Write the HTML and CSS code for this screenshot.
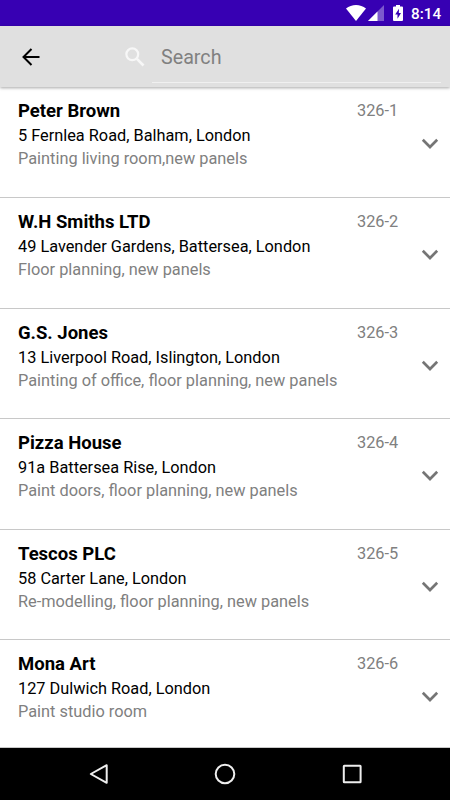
FILE: index.html
```html
<!DOCTYPE html>
<html lang="en">
<head>
<meta charset="utf-8">
<title>Jobs</title>
<link rel="stylesheet" href="styles.css">
</head>
<body>
<svg width="0" height="0" class="defs"><symbol id="chevron" viewBox="0 0 18 12"><path d="M1.8 1.8 9 9l7.200-7.200" fill="none" stroke="#757575" stroke-width="2.700"/></symbol></svg>
<div class="screen">
  <div class="status">
    <svg class="wifi" viewBox="0 0 20 16"><path d="M0 3.600C5.600-1.200 14.400-1.200 20 3.600L10 16Z" fill="#fff"/></svg>
    <svg class="signal" viewBox="0 0 16 16"><path d="M0 16 16 0v16Z" fill="#fff" opacity=".35"/><path d="M0 16 9.500 6.500V16Z" fill="#fff"/></svg>
    <svg class="battery" viewBox="0 0 10 16"><path d="M3 0h4v1.500h2a1 1 0 0 1 1 1V15a1 1 0 0 1-1 1H1a1 1 0 0 1-1-1V2.500a1 1 0 0 1 1-1h2Z" fill="#fff"/><path d="M6 3.800 2.200 9.500h2.300v4.200L8 8H5.800Z" fill="#3700b3"/></svg>
    <span class="clock">8:14</span>
  </div>
  <header class="toolbar">
    <svg class="back" viewBox="0 0 18 18"><path d="M17.500 9H1.500M9.500 1 1.500 9l8 8" fill="none" stroke="#000" stroke-width="2"/></svg>
    <svg class="lens" viewBox="0 0 20 20"><circle cx="7.300" cy="7.300" r="5.900" fill="none" stroke="#f7f7f7" stroke-width="2.200"/><path d="m11.700 11.700 6.800 6.800" stroke="#f7f7f7" stroke-width="2.600"/></svg>
    <div class="field">Search</div>
  </header>
  <main class="list">
    <article class="job"><h2>Peter Brown</h2><span class="ref">326-1</span><p class="addr">5 Fernlea Road, Balham, London</p><p class="desc">Painting living room,new panels</p><svg class="chev"><use href="#chevron"/></svg></article>
    <article class="job"><h2>W.H Smiths LTD</h2><span class="ref">326-2</span><p class="addr">49 Lavender Gardens, Battersea, London</p><p class="desc">Floor planning, new panels</p><svg class="chev"><use href="#chevron"/></svg></article>
    <article class="job"><h2>G.S. Jones</h2><span class="ref">326-3</span><p class="addr">13 Liverpool Road, Islington, London</p><p class="desc">Painting of office, floor planning, new panels</p><svg class="chev"><use href="#chevron"/></svg></article>
    <article class="job"><h2>Pizza House</h2><span class="ref">326-4</span><p class="addr">91a Battersea Rise, London</p><p class="desc">Paint doors, floor planning, new panels</p><svg class="chev"><use href="#chevron"/></svg></article>
    <article class="job"><h2>Tescos PLC</h2><span class="ref">326-5</span><p class="addr">58 Carter Lane, London</p><p class="desc">Re-modelling, floor planning, new panels</p><svg class="chev"><use href="#chevron"/></svg></article>
    <article class="job"><h2>Mona Art</h2><span class="ref">326-6</span><p class="addr">127 Dulwich Road, London</p><p class="desc">Paint studio room</p><svg class="chev"><use href="#chevron"/></svg></article>
  </main>
  <nav class="nav">
    <svg viewBox="0 0 22 22"><path d="M18.700 2.200v17.600L2.800 11Z" fill="none" stroke="#eee" stroke-width="2" stroke-linejoin="round"/></svg>
    <svg viewBox="0 0 22 22"><circle cx="11" cy="11" r="9.300" fill="none" stroke="#eee" stroke-width="2"/></svg>
    <svg viewBox="0 0 22 22"><rect x="2.800" y="2.800" width="16.800" height="16.400" rx=".5" fill="none" stroke="#eee" stroke-width="2"/></svg>
  </nav>
</div>
</body>
</html>
```
FILE: styles.css
```css
* { box-sizing: border-box; }
body { margin: 0; background: #fff; font-family: Roboto, sans-serif; }
.defs { position: absolute; }
.screen { width: 450px; height: 800px; display: flex; flex-direction: column; overflow: hidden; }
.status { height: 26px; flex: none; background: #3700b3; display: flex; align-items: flex-start; padding: 5px 9px 0 0; justify-content: flex-end; color: #fff; }
.wifi { width: 20px; height: 16px; margin-right: 2px; }
.signal { width: 16px; height: 16px; margin-right: 9px; }
.battery { width: 10px; height: 16px; margin-right: 8px; }
.clock { width: 30px; font-size: 15.300px; font-weight: 500; line-height: 18px; white-space: nowrap; }
.toolbar { height: 61px; flex: none; background: #e0e0e0; display: flex; padding-right: 9px; position: relative; z-index: 1; box-shadow: 0 1px 3px rgba(0,0,0,.35); }
.back { width: 18px; height: 18px; margin: 22px 0 0 22px; }
.lens { width: 20px; height: 20px; margin: 21px 0 0 85px; }
.field { flex: 1; height: 57px; margin-left: 7px; padding-left: 9px; border-bottom: 1px solid #f0f0f0; font-size: 19.700px; line-height: 63px; color: #808080; }
.list { flex: 1; min-height: 0; overflow: hidden; padding-top: .3px; }
.job { height: 110.640px; display: grid; grid-template-columns: 1fr 40px 53px; grid-template-rows: 24px 24px 23px; padding: 12px 0 0 18px; border-bottom: 1px solid #c8c8c8; }
.job:last-child { height: 107.500px; }
.job > * { margin: 0; white-space: nowrap; }
.job h2 { grid-area: 1 / 1; font-size: 18.500px; font-weight: 700; line-height: 24px; color: #000; }
.ref { grid-area: 1 / 2; font-size: 16.320px; line-height: 24px; color: #808080; }
.addr { grid-area: 2 / 1 / 3 / 3; font-size: 16.320px; line-height: 26px; color: #000; }
.desc { grid-area: 3 / 1 / 4 / 3; font-size: 16.340px; line-height: 23px; color: #808080; }
.job .chev { grid-area: 2 / 3; width: 18px; height: 12px; margin: 15px 0 0 24px; }
.nav { height: 52px; flex: none; background: #000; display: flex; justify-content: center; align-items: center; gap: 104.500px; }
.nav svg { width: 22px; height: 22px; }
```
